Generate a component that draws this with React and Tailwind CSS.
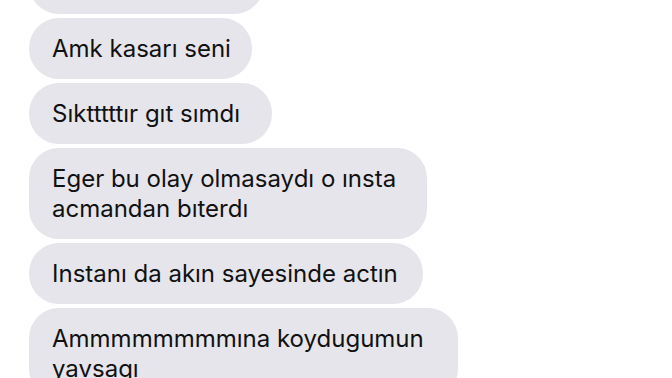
import React from "react";

const messages = [
  { lines: ["Amk kasarı seni"], w: "w-[223px]" },
  { lines: ["Sıktttttır gıt sımdı"], w: "w-[243px]" },
  { lines: ["Eger bu olay olmasaydı o ınsta", "acmandan bıterdı"], w: "w-[398px]" },
  { lines: ["Instanı da akın sayesinde actın"], w: "w-[394px]" },
  { lines: ["Ammmmmmmmına koydugumun", "yavsagı"], w: "w-[429px]" },
];

function Bubble({ lines, w }) {
  return (
    <div
      className={`${w} rounded-[30px] bg-[#e6e5eb] px-[23px] py-[15.5px] text-[24px] leading-[30px] text-[#111111] whitespace-nowrap`}
    >
      {lines.map((line, i) => (
        <div key={i}>{line}</div>
      ))}
    </div>
  );
}

export default function App() {
  return (
    <div
      className="h-[378px] w-[672px] overflow-hidden bg-white"
      style={{ fontFamily: "Inter, 'Liberation Sans', sans-serif" }}
    >
      <div className="mt-[-47px] flex flex-col gap-[4px] pl-[29px]">
        <div className="h-[61px] w-[235px] rounded-[30px] bg-[#e6e5eb]" />
        {messages.map((m, i) => (
          <Bubble key={i} lines={m.lines} w={m.w} />
        ))}
      </div>
    </div>
  );
}
